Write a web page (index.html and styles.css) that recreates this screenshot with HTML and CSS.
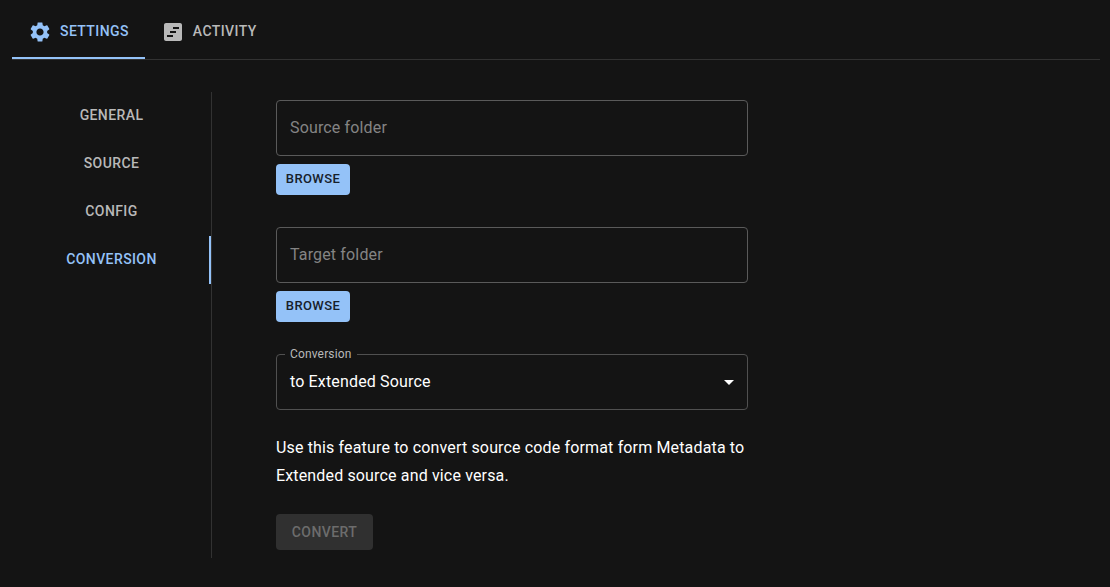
FILE: index.html
```html
<!DOCTYPE html>
<html lang="en">
<head>
<meta charset="utf-8">
<title>Settings</title>
<link rel="stylesheet" href="styles.css">
</head>
<body>
<nav class="tabs">
  <a class="tab tab-active"><svg class="icon" viewBox="0 0 24 24"><path d="M19.14 12.94c.04-.3.06-.61.06-.94 0-.32-.02-.64-.07-.94l2.03-1.58c.18-.14.23-.41.12-.61l-1.92-3.32c-.12-.22-.37-.29-.59-.22l-2.39.96c-.5-.38-1.03-.7-1.62-.94l-.36-2.54c-.04-.24-.24-.41-.48-.41h-3.84c-.24 0-.43.17-.47.41l-.36 2.54c-.59.24-1.13.57-1.62.94l-2.39-.96c-.22-.08-.47 0-.59.22L2.74 8.87c-.12.21-.08.47.12.61l2.03 1.58c-.05.3-.09.63-.09.94s.02.64.07.94l-2.03 1.58c-.18.14-.23.41-.12.61l1.92 3.32c.12.22.37.29.59.22l2.39-.96c.5.38 1.03.7 1.62.94l.36 2.54c.05.24.24.41.48.41h3.84c.24 0 .44-.17.47-.41l.36-2.54c.59-.24 1.13-.56 1.62-.94l2.39.96c.22.08.47 0 .59-.22l1.92-3.32c.12-.22.07-.47-.12-.61l-2.01-1.58zM12 15.6c-1.98 0-3.6-1.62-3.6-3.6s1.62-3.6 3.6-3.6 3.6 1.62 3.6 3.6-1.62 3.6-3.6 3.6z"/></svg><span>Settings</span></a>
  <a class="tab"><svg class="icon" viewBox="0 0 24 24"><path d="M19 3H5c-1.100 0-2 .9-2 2v14c0 1.100.9 2 2 2h14c1.100 0 2-.9 2-2V5c0-1.100-.9-2-2-2zM12 17H6v-2h6v2zm3-4H9v-2h6v2zm3-4h-6V7h6v2z"/></svg><span>Activity</span></a>
</nav>
<div class="body">
  <nav class="side">
    <a class="side-item">General</a>
    <a class="side-item">Source</a>
    <a class="side-item">Config</a>
    <a class="side-item side-active">Conversion</a>
  </nav>
  <main class="form">
    <div class="field placeholder">Source folder</div>
    <button class="browse">Browse</button>
    <div class="field placeholder">Target folder</div>
    <button class="browse">Browse</button>
    <fieldset class="select">
      <legend class="select-label">Conversion</legend>
      <div class="select-value"><span class="select-text">to Extended Source</span><svg class="icon" viewBox="0 0 24 24"><path d="M7 10l5 5 5-5z"/></svg></div>
    </fieldset>
    <p class="hint">Use this feature to convert source code format form Metadata to Extended source and vice versa.</p>
    <button class="convert" disabled>Convert</button>
  </main>
</div>
</body>
</html>
```
FILE: styles.css
```css
* { box-sizing: border-box; }
body {
  margin: 0;
  height: 587px;
  padding: 4px 10px 0 12px;
  background: #141414;
  color: #fff;
  font-family: Roboto, sans-serif;
  overflow: hidden;
}
.icon { width: 24px; height: 24px; fill: currentColor; flex: none; }
.tabs { display: flex; height: 56px; border-bottom: 1px solid #323232; }
.tab {
  display: flex;
  align-items: center;
  gap: 8px;
  height: 55px;
  padding: 1px 16px 0;
  font-size: 14px;
  font-weight: 500;
  letter-spacing: 0.4px;
  text-transform: uppercase;
  color: #b9b9b9;
}
.tab span { padding-bottom: 2px; }
.tab-active { color: #94c2f8; box-shadow: inset 0 -2px #94c2f8; }
.body { display: flex; padding-top: 32px; }
.side { width: 200px; height: 466px; border-right: 1px solid #323232; }
.side-item {
  display: flex;
  align-items: center;
  justify-content: center;
  height: 48px;
  padding-bottom: 2px;
  font-size: 14px;
  font-weight: 500;
  letter-spacing: 0.4px;
  text-transform: uppercase;
  color: #b9b9b9;
}
.side-active { color: #94c2f8; box-shadow: inset -2px 0 #94c2f8; }
.form { width: 472px; margin-left: 64px; padding-top: 8px; }
.field {
  display: flex;
  align-items: center;
  height: 56px;
  padding: 0 13px 2px;
  border: 1px solid #5a5a5a;
  border-radius: 4px;
  font-size: 16px;
  letter-spacing: 0.15px;
}
.placeholder { color: #848484; }
button {
  display: block;
  border: 0;
  border-radius: 4px;
  font-family: inherit;
  font-weight: 500;
  text-transform: uppercase;
}
.browse {
  width: 74px;
  height: 31px;
  margin: 8px 0 32px;
  padding: 0 0 2px;
  background: #94c2f8;
  color: #17202a;
  font-size: 13px;
  letter-spacing: 0.4px;
}
.select {
  height: 61px;
  margin: -5px 0 0;
  padding: 0 6px 0 8px;
  border: 1px solid #505050;
  border-radius: 4px;
}
.select-label { height: 11px; padding: 0 5px; font-size: 12px; line-height: 11px; letter-spacing: 0.15px; color: #b9b9b9; }
.select-value {
  display: flex;
  align-items: center;
  justify-content: space-between;
  height: 44px;
  padding: 0 0 0 5px;
  font-size: 16px;
  letter-spacing: 0.15px;
}
.select-text { padding-bottom: 2px; }
.hint { margin: 24px 0; font-size: 16px; line-height: 28px; letter-spacing: 0.15px; }
.convert {
  width: 97px;
  height: 36px;
  padding: 0;
  background: #303030;
  color: #6c6c6c;
  font-size: 14px;
  letter-spacing: 0.4px;
}
```
